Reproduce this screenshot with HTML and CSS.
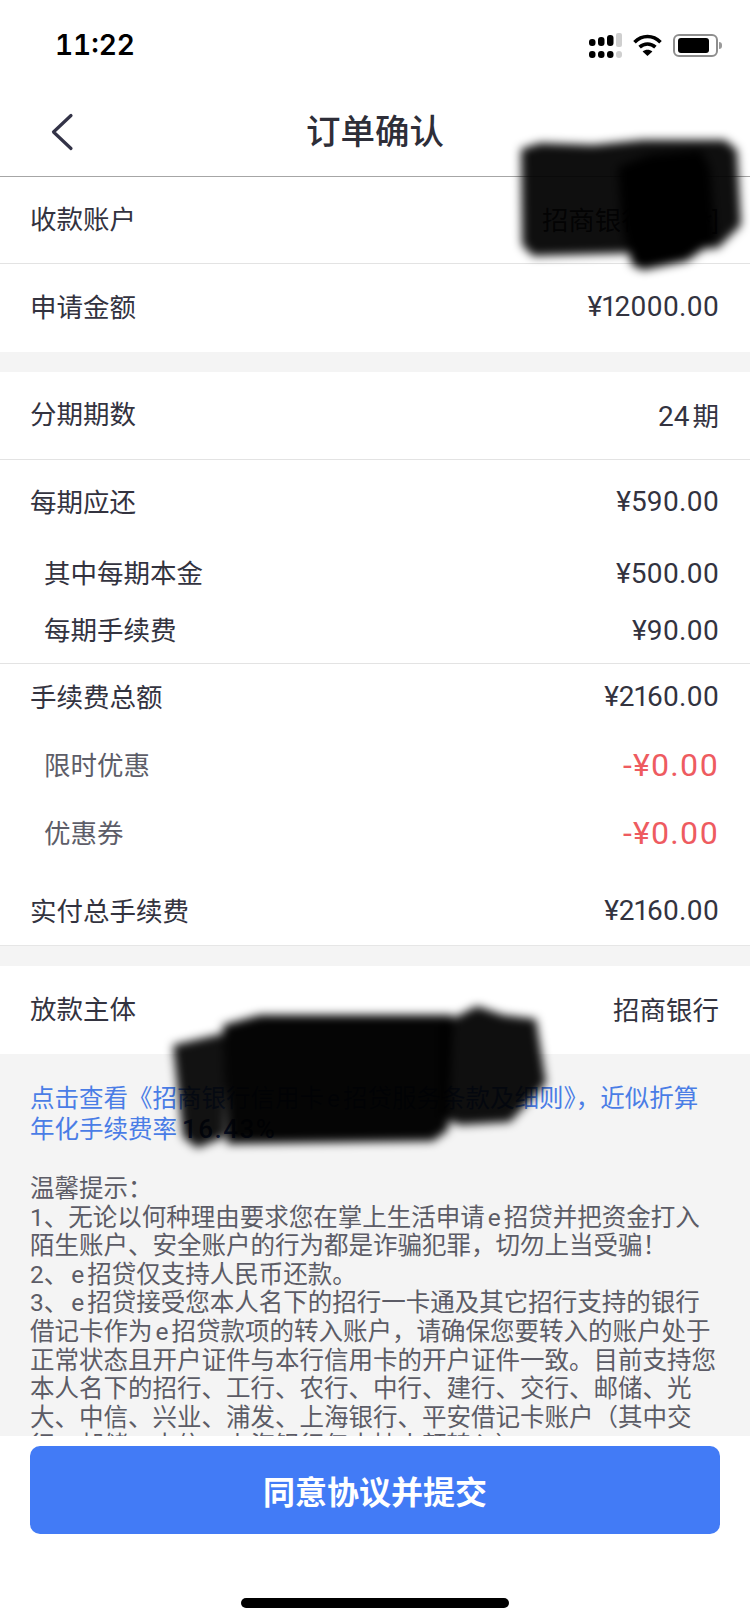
FILE: index.html
```html
<!DOCTYPE html>
<html lang="zh-CN">
<head>
    <meta charset="UTF-8">
    <meta name="viewport" content="width=device-width, initial-scale=1.0">
    <title>订单确认</title>
    <link rel="stylesheet" href="styles.css">
</head>
<body>

    <div class="status-bar">
        <span class="time">11:22</span>
        <div class="status-icons">
            <svg class="signal" width="33" height="25" viewBox="0 0 33 25">
                <rect x="0" y="6" width="6.5" height="7" rx="3"/>
                <rect x="9" y="4" width="6.5" height="9" rx="3"/>
                <rect x="18" y="2" width="6.5" height="11" rx="3"/>
                <rect x="27" y="0" width="6" height="14" rx="2" fill="#cfcfcf"/>
                <rect x="0" y="18" width="6.5" height="7" rx="3"/>
                <rect x="9" y="18" width="6.5" height="7" rx="3"/>
                <rect x="18" y="18" width="6.5" height="7" rx="3"/>
                <rect x="27" y="18" width="6" height="7" rx="3" fill="#cfcfcf"/>
            </svg>
            <svg class="wifi" width="29" height="22" viewBox="0 0 29 22">
                <path d="M1.5 8.2C9 .6 20 .6 27.5 8.2" fill="none" stroke="#000" stroke-width="3.6"/>
                <path d="M6.6 13.2C11.2 9 17.8 9 22.4 13.2" fill="none" stroke="#000" stroke-width="3.6"/>
                <path d="M9.6 17.4C12.4 15.2 16.6 15.2 19.4 17.4L14.5 22Z"/>
            </svg>
            <div class="battery">
                <div class="battery-level"></div>
            </div>
        </div>
    </div>

    <header class="nav">
        <svg class="back" width="24" height="38" viewBox="0 0 24 38">
            <path d="M21 2.5L3.5 19L21 35.5" fill="none" stroke="#333347" stroke-width="3.2" stroke-linecap="round" stroke-linejoin="round"/>
        </svg>
        <h1>订单确认</h1>
    </header>

    <main class="content">
        <section class="group">
            <div class="row row-first line"><span>收款账户</span><span class="value value-cn">招商银行[*****]</span></div>
            <div class="row"><span>申请金额</span><span class="value">¥12000.00</span></div>
        </section>

        <section class="group gap-top">
            <div class="row line"><span>分期期数</span><span class="value">24<span class="unit">期</span></span></div>
            <div class="row row-tight"><span>每期应还</span><span class="value">¥590.00</span></div>
            <div class="row row-sub"><span>其中每期本金</span><span class="value">¥500.00</span></div>
            <div class="row row-sub"><span>每期手续费</span><span class="value">¥90.00</span></div>
        </section>

        <section class="group top-line">
            <div class="row row-fee"><span>手续费总额</span><span class="value">¥2160.00</span></div>
            <div class="row row-fee row-discount"><span>限时优惠</span><span class="value minus">-¥0.00</span></div>
            <div class="row row-fee row-discount"><span>优惠券</span><span class="value minus">-¥0.00</span></div>
            <div class="row row-total"><span>实付总手续费</span><span class="value">¥2160.00</span></div>
        </section>

        <section class="group gap-top">
            <div class="row"><span>放款主体</span><span class="value value-cn">招商银行</span></div>
        </section>

        <section class="notes">
            <p class="link">点击查看《招商银行信用卡<span class="latin">e</span>招贷服务条款及细则》，近似折算年化手续费率<span class="rate">16.43%</span></p>
            <p class="tips">
                温馨提示：<br>
                1、无论以何种理由要求您在掌上生活申请<span class="latin">e</span>招贷并把资金打入陌生账户、安全账户的行为都是诈骗犯罪，切勿上当受骗！<br>
                2、<span class="latin">e</span>招贷仅支持人民币还款。<br>
                3、<span class="latin">e</span>招贷接受您本人名下的招行一卡通及其它招行支持的银行借记卡作为<span class="latin">e</span>招贷款项的转入账户，请确保您要转入的账户处于正常状态且开户证件与本行信用卡的开户证件一致。目前支持您本人名下的招行、工行、农行、中行、建行、交行、邮储、光大、中信、兴业、浦发、上海银行、平安借记卡账户（其中交行、邮储、中信、上海银行仅支持小额转入）。
            </p>
        </section>
    </main>

    <footer class="footer">
        <button type="button" class="submit">同意协议并提交</button>
        <div class="home-bar"></div>
    </footer>

    <!-- hand painted smears over the private data -->
    <svg class="smears" width="750" height="1624" viewBox="0 0 750 1624">
        <polygon opacity="0.94" points="521,149 540,143 593,145 643,140 725,140 737,150 741,225 718,248 633,253 533,256 522,245"/>
        <polygon points="618,167 650,155 701,150 710,168 716,240 687,261 643,270 632,265 622,225"/>
        <polygon opacity="0.93" points="173,1045 225,1033 225,1137 197,1148 183,1137"/>
        <polygon opacity="0.98" points="223,1025 260,1015 453,1015 448,1130 433,1141 227,1144"/>
        <polygon opacity="0.94" points="440,1025 477,1006 503,1015 536,1019 546,1083 510,1122 460,1125 440,1117"/>
    </svg>

</body>
</html>
```

FILE: styles.css
```css
body {
    font-family: Roboto, "Noto Sans CJK SC", sans-serif;
    margin: 0;
    padding: 0;
    width: 750px;
    height: 1624px;
    position: relative;
    overflow: hidden;
    display: flex;
    flex-direction: column;
    background-color: #fff;
    color: #33333f;
}

.status-bar {
    height: 88px;
    flex-shrink: 0;
    box-sizing: border-box;
    padding: 2px 28px 0 55px;
    display: flex;
    justify-content: space-between;
    align-items: center;
}

.time {
    font-family: Inter, sans-serif;
    font-size: 28px;
    font-weight: 600;
    font-variant-numeric: tabular-nums;
    color: #000;
}

.status-icons {
    display: flex;
    align-items: center;
    gap: 11px;
}

.battery {
    width: 45px;
    height: 23px;
    box-sizing: border-box;
    border: 2px solid #8e8e8e;
    border-radius: 6px;
    padding: 2px 7px 2px 3px;
    position: relative;
    margin-right: 4px;
}

.battery::after {
    content: "";
    position: absolute;
    right: -6px;
    top: 6px;
    width: 3px;
    height: 7px;
    border-radius: 0 3px 3px 0;
    background-color: #9a9a9a;
}

.battery-level {
    height: 100%;
    background-color: #000;
    border-radius: 3px;
}

.nav {
    height: 89px;
    flex-shrink: 0;
    box-sizing: border-box;
    padding-bottom: 6px;
    border-bottom: 1px solid #a6a6a6;
    position: relative;
    display: flex;
    align-items: center;
    justify-content: center;
}

.back {
    position: absolute;
    left: 50px;
    top: 25px;
}

.nav h1 {
    margin: 0;
    font-family: "Noto Sans CJK SC", sans-serif;
    font-size: 34.5px;
    font-weight: 500;
    color: #2e2e38;
}

.content {
    flex: 1;
    min-height: 0;
    overflow: hidden;
    background-color: #f4f4f4;
}

.group {
    background-color: #fff;
}

.gap-top {
    margin-top: 20px;
}

.top-line {
    border-top: 1px solid #e3e3e3;
    border-bottom: 1px solid #e6e6e6;
}

.row {
    height: 88px;
    box-sizing: border-box;
    padding: 0 31px 3px 30px;
    display: flex;
    justify-content: space-between;
    align-items: center;
    font-size: 26.5px;
}

.row > span:first-child {
    padding-bottom: 3px;
}

.row-first {
    height: 87px;
}

.line {
    border-bottom: 1px solid #e3e3e3;
}

.value {
    font-size: 28px;
    font-variant-numeric: proportional-nums;
}

.value-cn {
    font-size: 26.5px;
}

.unit {
    font-size: 26.5px;
    margin-left: 3px;
}

.row-tight {
    height: 86px;
}

.row-sub {
    height: 57px;
    padding-left: 44px;
}

.row-sub:last-child {
    height: 60px;
    padding-bottom: 6px;
}

.row-fee {
    height: 68px;
}

.row-discount {
    padding-left: 44px;
    color: #5d5d68;
}

.minus {
    font-size: 32px;
    letter-spacing: 1px;
    color: #ee5b60;
}

.row-total {
    height: 77px;
    padding-top: 11px;
}

.notes {
    padding: 30px 30px 0 30px;
    font-size: 24.5px;
    line-height: 28.6px;
    color: #5c5c66;
}

.notes p {
    margin: 0;
}

.latin {
    margin: 0 3px;
}

.link {
    line-height: 30px;
    color: #4a7de6;
    margin-bottom: 30px !important;
}

.rate {
    font-size: 26px;
    font-weight: 500;
    letter-spacing: 1.5px;
    margin-left: 5px;
    color: #1d3a86;
}

.footer {
    height: 188px;
    flex-shrink: 0;
    box-sizing: border-box;
    padding: 10px 30px 0 30px;
    background-color: #fff;
}

.submit {
    display: block;
    width: 690px;
    height: 88px;
    background-color: #427bf6;
    color: #fff;
    border: none;
    border-radius: 10px;
    font-family: "Noto Sans CJK SC", sans-serif;
    font-size: 32px;
    font-weight: 600;
    cursor: pointer;
}

.home-bar {
    width: 268px;
    height: 10px;
    margin: 64px auto 0 auto;
    background-color: #000;
    border-radius: 5px;
}

.smears {
    position: absolute;
    left: 0;
    top: 0;
    filter: blur(5px);
    pointer-events: none;
}
```
